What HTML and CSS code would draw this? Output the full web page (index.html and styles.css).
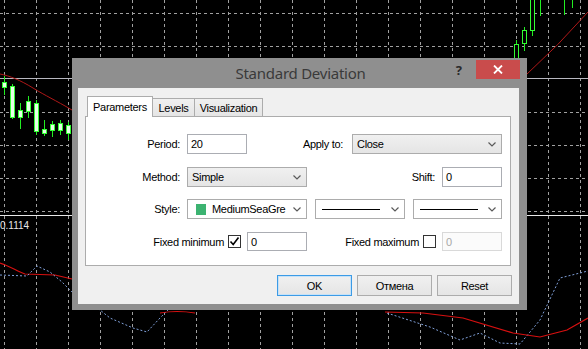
FILE: index.html
```html
<!DOCTYPE html>
<html>
<head>
<meta charset="utf-8">
<link rel="stylesheet" href="styles.css">
</head>
<body>
<div class="screen">
  <svg class="chart" viewBox="0 0 588 349" width="588" height="349">
    <g class="grid">
      <path d="M4.5 0V349M36.5 0V349M68.5 0V349M100.5 0V349M132.5 0V349M164.5 0V349M196.5 0V349M228.5 0V349M260.5 0V349M292.5 0V349M324.5 0V349M356.5 0V349M388.5 0V349M420.5 0V349M452.5 0V349M484.5 0V349M516.5 0V349M548.5 0V349M580.5 0V349"/>
      <path d="M0 13.5H588M0 46.5H588M0 112.5H588M0 145.5H588M0 178.5H588M0 211.5H588"/>
    </g>
    <path class="level" d="M0 78.5H588"/>
    <path class="sep" d="M0 215.5H588"/>
    <path class="ma" d="M0 74 C10 76 20 80 33 88 S55 100 72 110"/>
    <path class="ma" d="M527 74 Q558 46 588 12"/>
    <g class="bear">
      <path class="wick" d="M4.5 76V95M12.5 84V119M20.5 103V129M28.5 96V118M36.5 100V135M44.5 120V136M52.5 121V137M60.5 120V135M68.5 122V140"/>
      <rect x="2.5" y="82.5" width="4" height="5"/>
      <rect x="10.5" y="86.5" width="4" height="31"/>
      <rect x="18.5" y="110.5" width="4" height="7"/>
      <rect x="26.5" y="101.5" width="4" height="10"/>
      <rect x="34.5" y="103.5" width="4" height="28"/>
      <rect x="42.5" y="129.5" width="4" height="4"/>
      <rect x="50.5" y="124.5" width="4" height="6"/>
      <rect x="58.5" y="123.5" width="4" height="7"/>
      <rect x="66.5" y="125.5" width="4" height="8"/>
    </g>
    <g class="bull">
      <path class="wick" d="M516.5 40V62M524.5 27V51M532.5 0V36M540.5 0V16M564.5 0V15M572.5 0V8"/>
      <rect x="514.5" y="44.5" width="4" height="14"/>
      <rect x="522.5" y="30.5" width="4" height="13"/>
      <rect x="530.5" y="-2" width="4" height="32.5"/>
    </g>
    <text class="price" x="0" y="229">0.1114</text>
    <path class="sd" d="M0 263 C10 266 18 272 25 274 L55 275 L72 279"/>
    <path class="dev" d="M0 275 L27 276 L37 266 L50 272 L62 282 L72 292"/>
    <path class="dev" d="M95 306 L110 318 L133 328 L147 332 L160 318 L172 306"/>
    <path class="sd" d="M160 313 Q177 310 195 313"/>
    <path class="dev" d="M387 313 L430 327 L460 340 L480 333 L500 343 L520 344 L540 320 L560 278 L588 271"/>
    <path class="sd" d="M385 312 L423 313 L463 318 L513 333 L540 337 L567 330 L588 318"/>
  </svg>

  <div class="dialog">
    <div class="titlebar">
      <span class="title">Standard Deviation</span>
      <span class="help">?</span>
      <span class="close">
        <svg width="10" height="9" viewBox="0 0 10 9"><path d="M1 0.5L9 8.5M9 0.5L1 8.5" stroke="#fff" stroke-width="1.8" fill="none"/></svg>
      </span>
    </div>
    <div class="client">
      <div class="tabs">
        <div class="tab active">Parameters</div>
        <div class="tab t-levels">Levels</div>
        <div class="tab t-vis">Visualization</div>
      </div>
      <div class="panel">
        <div class="row">
          <label class="lbl">Period:</label>
          <div class="edit w60">20</div>
          <label class="lbl grow pr9">Apply to:</label>
          <div class="combo w150"><span>Close</span><svg class="chev" width="8" height="5" viewBox="0 0 8 5"><path d="M0.5 0.5L4 4L7.5 0.5" fill="none" stroke="#5a5a5a" stroke-width="1.2"/></svg></div>
        </div>
        <div class="row">
          <label class="lbl">Method:</label>
          <div class="combo w120"><span>Simple</span><svg class="chev" width="8" height="5" viewBox="0 0 8 5"><path d="M0.5 0.5L4 4L7.5 0.5" fill="none" stroke="#5a5a5a" stroke-width="1.2"/></svg></div>
          <label class="lbl grow pr7">Shift:</label>
          <div class="edit w60">0</div>
        </div>
        <div class="row">
          <label class="lbl">Style:</label>
          <div class="combo owner w120"><i class="swatch"></i><span>MediumSeaGre</span><svg class="chev" width="8" height="5" viewBox="0 0 8 5"><path d="M0.5 0.5L4 4L7.5 0.5" fill="none" stroke="#5a5a5a" stroke-width="1.2"/></svg></div>
          <div class="combo owner w90 ml8"><i class="line"></i><svg class="chev" width="8" height="5" viewBox="0 0 8 5"><path d="M0.5 0.5L4 4L7.5 0.5" fill="none" stroke="#5a5a5a" stroke-width="1.2"/></svg></div>
          <div class="combo owner w89 ml8"><i class="line"></i><svg class="chev" width="8" height="5" viewBox="0 0 8 5"><path d="M0.5 0.5L4 4L7.5 0.5" fill="none" stroke="#5a5a5a" stroke-width="1.2"/></svg></div>
        </div>
        <div class="row r4">
          <div class="chkgroup g1">
            <label class="plain">Fixed minimum</label>
            <span class="check on"><svg width="11" height="11" viewBox="0 0 11 11"><path d="M1.5 5.5L4.2 8.5L9.5 1.5" fill="none" stroke="#000" stroke-width="1.6"/></svg></span>
          </div>
          <div class="edit w60 h19">0</div>
          <div class="chkgroup g2">
            <label class="plain">Fixed maximum</label>
            <span class="check"></span>
          </div>
          <div class="edit w60 h19 disabled">0</div>
        </div>
      </div>
      <div class="buttons">
        <div class="btn default">OK</div>
        <div class="btn">Отмена</div>
        <div class="btn">Reset</div>
      </div>
    </div>
  </div>
</div>
</body>
</html>
```

FILE: styles.css
```css
* { box-sizing: border-box; }
html, body { margin: 0; padding: 0; background: #000; }
body { width: 588px; height: 349px; overflow: hidden; }
.screen { position: relative; width: 588px; height: 349px; background: #000; }

.chart { position: absolute; left: 0; top: 0; display: block; }
.grid path { stroke: #a0a0a0; stroke-width: 1; stroke-dasharray: 3 3; fill: none; }
.level { stroke: #b8b8c0; stroke-width: 1; fill: none; }
.sep { stroke: #e8e8e8; stroke-width: 1; fill: none; }
.ma { stroke: #b01818; stroke-width: 1; fill: none; }
.sd { stroke: #d81010; stroke-width: 1.2; fill: none; }
.dev { stroke: #7f9fd8; stroke-width: 1; stroke-dasharray: 2 2; fill: none; }
.wick { stroke: #22ee22; stroke-width: 1; fill: none; }
.bear rect { fill: #e6ffe6; stroke: #33ff33; stroke-width: 1; }
.bull rect { fill: #000; stroke: #33ff33; stroke-width: 1; }
.price { fill: #e8e8e8; font-family: "Liberation Sans", Arial, sans-serif; font-size: 10px; }

.dialog {
  position: absolute; left: 72px; top: 58px; width: 455px; height: 252px;
  background: #8f8f8f;
  padding: 0 8px 6px 6px;
  display: flex; flex-direction: column;
}
.titlebar {
  height: 30px; flex: none; position: relative;
  display: flex; align-items: center; justify-content: center;
}
.title {
  font-family: "Noto Sans", "Open Sans", sans-serif; font-size: 15px;
  color: #3a3a3a; margin-left: 4px; margin-top: -1px; letter-spacing: -0.25px;
}
.help {
  position: absolute; right: 57px; top: 3px;
  font-family: "Noto Sans", sans-serif; font-weight: bold; font-size: 13px; color: #2a2a2a;
}
.close {
  position: absolute; right: -1px; top: 2px; width: 44px; height: 19px;
  background: #c94c4c;
  display: flex; align-items: center; justify-content: center;
}
.close svg { display: block; }

.client {
  flex: 1; background: #f0f0f0;
  padding: 8px 8px 0 7px;
  font-family: "Liberation Sans", Arial, sans-serif; font-size: 11px; letter-spacing: -0.3px; color: #000;
  display: flex; flex-direction: column;
}
.tabs { display: flex; align-items: flex-end; height: 20px; padding-left: 2px; position: relative; z-index: 1; }
.tab {
  height: 18px; border: 1px solid #acacac; border-bottom: none;
  background: linear-gradient(#f0f0f0, #e5e5e5);
  display: flex; align-items: center; justify-content: center;
  padding-top: 1px; margin-left: -1px;
}
.tab.active { height: 21px; margin-bottom: -1px; background: #fff; width: 66px; margin-left: 0; padding-top: 0; }
.t-levels { width: 43px; }
.t-vis { width: 69px; }

.panel {
  height: 150px; background: #fff; border: 1px solid #acacac;
  padding: 17px 8px 0 0;
  display: flex; flex-direction: column;
}
.row { display: flex; align-items: center; height: 20px; margin-bottom: 13px; }
.row:nth-child(2) { margin-bottom: 12px; }
.lbl { width: 94px; text-align: right; margin-right: 7px; flex: none; }
.lbl.grow { flex: 1; width: auto; margin-right: 0; }
.pr9 { padding-right: 9px; }
.pr7 { padding-right: 7px; }

.edit {
  height: 20px; border: 1px solid #abadb3; background: #fff;
  padding: 0 3px; display: flex; align-items: center; flex: none;
}
.edit.h19 { height: 19px; }
.edit.disabled { border-color: #d9d9d9; color: #a8a8a8; background: #fbfbfb; }
.w60 { width: 60px; }
.w90 { width: 90px; }
.w89 { width: 89px; }
.w120 { width: 120px; }
.w150 { width: 150px; }
.ml8 { margin-left: 8px; }

.combo {
  height: 20px; border: 1px solid #acacac; background: linear-gradient(#f0f0f0, #e5e5e5);
  position: relative; display: flex; align-items: center; padding-left: 4px; flex: none;
}
.combo.owner { background: #fff; }
.chev { position: absolute; right: 5px; top: 7px; }
.swatch { width: 10px; height: 11px; background: #3cb371; margin-left: 4px; margin-right: 6px; flex: none; }
.line { display: block; width: 58px; height: 1px; background: #000; margin-left: 2px; }

.r4 { height: 19px; }
.chkgroup { display: flex; align-items: center; justify-content: flex-end; flex: none; }
.g1 { width: 161px; padding-right: 6px; }
.g2 { width: 135px; padding-right: 6px; }
.plain { margin-right: 4px; }
.check {
  width: 13px; height: 13px; border: 1px solid #333; background: #fff;
  display: flex; align-items: center; justify-content: center;
}
.check svg { display: block; }

.buttons { display: flex; justify-content: flex-end; gap: 5px; padding-top: 9px; margin-right: -1px; }
.btn {
  width: 75px; height: 21px; border: 1px solid #acacac;
  background: linear-gradient(#f0f0f0, #e5e5e5);
  display: flex; align-items: center; justify-content: center;
}
.btn.default { border-color: #3c9be6; box-shadow: inset 0 0 0 1px #c6e2f8; }
```
